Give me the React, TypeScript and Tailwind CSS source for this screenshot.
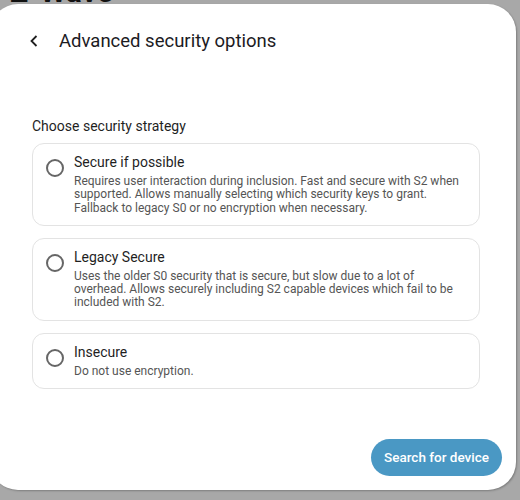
import React from "react";

const options = [
  {
    title: "Secure if possible",
    desc: "Requires user interaction during inclusion. Fast and secure with S2 when supported. Allows manually selecting which security keys to grant. Fallback to legacy S0 or no encryption when necessary.",
  },
  {
    title: "Legacy Secure",
    desc: "Uses the older S0 security that is secure, but slow due to a lot of overhead. Allows securely including S2 capable devices which fail to be included with S2.",
  },
  {
    title: "Insecure",
    desc: "Do not use encryption.",
  },
];

export default function App() {
  return (
    <div
      className="relative w-[520px] h-[500px] overflow-hidden bg-[#a8a8a8]"
      style={{ fontFamily: "Roboto, 'Noto Sans', sans-serif" }}
    >
      <div className="absolute left-[10px] top-[-23px] text-[30px] leading-[30px] font-bold text-[#111]">
        Z-Wave
      </div>
      <div className="relative ml-[-10px] mt-[4px] w-[526px] h-[486px] rounded-[28px] bg-white shadow-[1px_1px_2px_rgba(0,0,0,0.25)] flex flex-col">
        <div className="pl-[39px] pt-[25px] flex items-center h-[49px]">
          <svg width="10" height="14" viewBox="0 0 10 14" className="shrink-0">
            <path d="M7.5 2 L2.5 7 L7.5 12" fill="none" stroke="#1f1f1f" strokeWidth="1.8" />
          </svg>
          <div className="ml-[20px] text-[18.5px] leading-[24px] text-[#1c1b1f]">
            Advanced security options
          </div>
        </div>
        <div className="pl-[42px] mt-[63px] text-[14px] leading-[20px] text-[#1f1f1f]">
          Choose security strategy
        </div>
        <div className="pl-[42px] mt-[7px] flex flex-col gap-[12px]">
          {options.map((o) => (
            <div
              key={o.title}
              className="w-[448px] rounded-[12px] border border-[#e3e3e3] pl-[13px] pr-[14px] pt-[8px] pb-[10px] flex items-start gap-[10px]"
            >
              <div className="mt-[7px] w-[18px] h-[18px] shrink-0 rounded-full border-[2px] border-[#666666]" />
              <div className="flex flex-col">
                <div className="text-[14px] leading-[20px] text-[#1f1f1f]">{o.title}</div>
                <div className="mt-[3px] text-[12px] leading-[13.3px] text-[#555555]">
                  {o.desc}
                </div>
              </div>
            </div>
          ))}
        </div>
        <div className="mt-[50px] flex justify-end pr-[14px]">
          <button className="h-[37px] w-[131px] rounded-full bg-[#4a98c4] text-white text-[13.5px] font-medium">
            Search for device
          </button>
        </div>
      </div>
    </div>
  );
}
